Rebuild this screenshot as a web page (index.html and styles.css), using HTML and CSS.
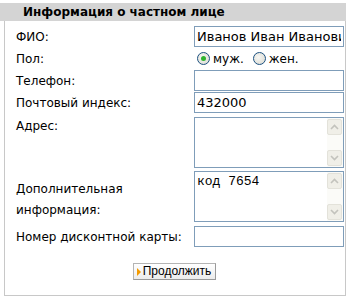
FILE: index.html
```html
<!DOCTYPE html>
<html lang="ru">
<head>
<meta charset="utf-8">
<link rel="stylesheet" href="styles.css">
</head>
<body>
<div class="box">
  <div class="head">Информация о частном лице</div>
  <div class="panel">
    <div class="form">
      <div class="row r-in">
        <label class="lbl">ФИО:</label>
        <div class="field"><input class="inp" type="text" value="Иванов Иван Иванович"></div>
      </div>
      <div class="row r-in">
        <div class="lbl">Пол:</div>
        <div class="field radios">
          <span class="radio on"></span><span class="rlabel first">муж.</span>
          <span class="radio"></span><span class="rlabel">жен.</span>
        </div>
      </div>
      <div class="row r-in">
        <label class="lbl">Телефон:</label>
        <div class="field"><input class="inp" type="text" value=""></div>
      </div>
      <div class="row r-in">
        <label class="lbl">Почтовый индекс:</label>
        <div class="field"><input class="inp" type="text" value="432000"></div>
      </div>
      <div class="row r-ta top addr">
        <div class="lbl">Адрес:</div>
        <div class="field">
          <div class="ta">
            <div class="ta-text"></div>
            <div class="sb">
              <div class="sbtn"><svg width="9" height="6" viewBox="0 0 9 6"><path d="M1 5 L4.5 1.5 L8 5" fill="none" stroke="#c3c3bd" stroke-width="1.6"/></svg></div>
              <div class="strack"></div>
              <div class="sbtn"><svg width="9" height="6" viewBox="0 0 9 6"><path d="M1 1 L4.5 4.5 L8 1" fill="none" stroke="#c3c3bd" stroke-width="1.6"/></svg></div>
            </div>
          </div>
        </div>
      </div>
      <div class="row r-ta extra">
        <div class="lbl two">Дополнительная<br>информация:</div>
        <div class="field">
          <div class="ta">
            <div class="ta-text mono">код 7654</div>
            <div class="sb">
              <div class="sbtn"><svg width="9" height="6" viewBox="0 0 9 6"><path d="M1 5 L4.5 1.5 L8 5" fill="none" stroke="#c3c3bd" stroke-width="1.6"/></svg></div>
              <div class="strack"></div>
              <div class="sbtn"><svg width="9" height="6" viewBox="0 0 9 6"><path d="M1 1 L4.5 4.5 L8 1" fill="none" stroke="#c3c3bd" stroke-width="1.6"/></svg></div>
            </div>
          </div>
        </div>
      </div>
      <div class="row r-in card">
        <label class="lbl">Номер дисконтной карты:</label>
        <div class="field"><input class="inp" type="text" value=""></div>
      </div>
    </div>
    <div class="actions">
      <div class="btn"><span class="tri"></span>Продолжить</div>
    </div>
  </div>
</div>
</body>
</html>
```
FILE: styles.css
```css
* { box-sizing: border-box; }
html, body { margin: 0; padding: 0; background: #fff; }
body {
  font-family: "DejaVu Sans", Verdana, sans-serif;
  font-size: 12px;
  color: #000;
}
.box { padding-top: 3px; width: 346px; }
.head {
  height: 18px;
  background: #d4d4d4;
  font-weight: bold;
  font-size: 12px;
  line-height: 18px;
  padding-left: 23px;
}
.panel {
  margin-left: 4px;
  width: 342px;
  height: 275px;
  border: 1px solid #c8c8c8;
  border-top: none;
  padding-top: 5px;
}
.form {
  display: flex;
  flex-direction: column;
  gap: 1px;
}
.row {
  display: flex;
  align-items: center;
}
.row.top { align-items: flex-start; }
.addr { margin-top: 3px; }
.extra { margin-top: 2px; }
.card { margin-top: 3px; }
.r-in { height: 21px; }
.r-ta { height: 51px; }
.lbl {
  width: 189px;
  padding-left: 11px;
  flex: none;
}
.top .lbl { padding-top: 2px; }
.lbl.two { line-height: 21px; padding-top: 6px; }
.field { width: 150px; flex: none; }
.inp {
  display: block;
  width: 150px;
  height: 21px;
  margin: 0;
  border: 1px solid #7f9db9;
  background: #fff;
  padding: 0 2px;
  font-family: "DejaVu Sans", Verdana, sans-serif;
  font-size: 13px;
  color: #000;
  outline: none;
}
.radios {
  display: flex;
  align-items: center;
  padding-left: 3px;
}
.radio {
  width: 13px;
  height: 13px;
  border-radius: 50%;
  border: 1px solid #1c5180;
  background: radial-gradient(circle at 40% 40%, #f6f6f3, #d8d8d0);
  position: relative;
  flex: none;
}
.radio.on::after {
  content: "";
  position: absolute;
  left: 3px; top: 3px;
  width: 5px; height: 5px;
  border-radius: 50%;
  background: #2fb32f;
}
.rlabel { margin: 0 5px 0 3px; }
.rlabel.first { margin-right: 9px; }
.ta {
  height: 51px;
  border: 1px solid #7f9db9;
  background: #fff;
  display: flex;
}
.ta-text {
  flex: 1;
  padding: 2px 2px;
}
.mono { font-family: "Liberation Mono", "Courier New", monospace; font-size: 13px; }
.sb {
  width: 16px;
  flex: none;
  display: flex;
  flex-direction: column;
  background: #fbfbf8;
  padding: 1px 1px 1px 0;
}
.sbtn {
  height: 16px;
  background: #f0efe8;
  border: 1px solid #e3e2da;
  border-radius: 2px;
  display: flex;
  align-items: center;
  justify-content: center;
}
.strack { flex: 1; }
.actions {
  display: flex;
  justify-content: center;
  padding-top: 16px;
  padding-right: 1px;
}
.btn {
  height: 17px;
  border: 1px solid #b4b4b4;
  border-right-color: #9a9a9a;
  border-bottom-color: #9a9a9a;
  background: linear-gradient(#ffffff, #ececec);
  font-family: "Liberation Sans", Arial, sans-serif;
  font-size: 12px;
  line-height: 15px;
  padding: 0 4px 0 3px;
  display: flex;
  align-items: center;
}
.tri {
  width: 0; height: 0;
  border-left: 4px solid #f39a00;
  border-top: 4px solid transparent;
  border-bottom: 4px solid transparent;
  margin-right: 2px;
}
```
